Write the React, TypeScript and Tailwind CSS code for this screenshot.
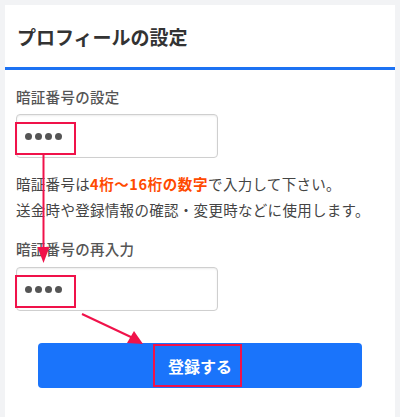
import React from "react";

const font = { fontFamily: '"Noto Sans CJK JP", "Noto Sans", sans-serif' };

function Dots() {
  return (
    <div className="flex items-center gap-[3px]">
      <span className="w-[7px] h-[7px] rounded-full bg-[#555]" />
      <span className="w-[7px] h-[7px] rounded-full bg-[#555]" />
      <span className="w-[7px] h-[7px] rounded-full bg-[#555]" />
      <span className="w-[7px] h-[7px] rounded-full bg-[#555]" />
    </div>
  );
}

function PinInput() {
  return (
    <div className="relative w-[202px] h-[44px] border border-[#cfcfcf] rounded-[4px] bg-white shadow-[inset_0_1px_2px_rgba(0,0,0,0.08)] flex items-center pl-[8px]">
      <Dots />
      <div className="absolute left-[-2px] top-[7px] w-[61px] h-[33px] border-2 border-[#f0124a]" />
    </div>
  );
}

export default function App() {
  return (
    <div className="relative min-h-[417px] bg-[#f2f3f5] pt-[5px] px-[5px]" style={font}>
      <div className="bg-white w-[390px] h-[412px] flex flex-col">
        <div className="h-[62px] flex items-center pl-[12px] text-[19px] font-bold text-[#333] leading-none">
          プロフィールの設定
        </div>
        <div className="h-[3px] bg-[#1d72f3]" />
        <div className="flex flex-col pl-[11px] pt-[17px]">
          <div className="text-[14.5px] leading-[20px] text-[#555] font-medium tracking-[0.3px]">暗証番号の設定</div>
          <div className="mt-[7px]">
            <PinInput />
          </div>
          <div className="mt-[13px] text-[14.5px] leading-[26px] text-[#444] tracking-[0.3px]">
            <div>
              暗証番号は<span className="text-[#ff4a00] font-bold tracking-[0.6px]">4桁〜16桁の数字</span>で入力して下さい。
            </div>
            <div>送金時や登録情報の確認・変更時などに使用します。</div>
          </div>
          <div className="mt-[16px] text-[14.5px] leading-[20px] text-[#555] font-medium tracking-[0.3px]">暗証番号の再入力</div>
          <div className="mt-[8px]">
            <PinInput />
          </div>
        </div>
        <div className="mt-[32px] flex justify-center">
          <div className="relative w-[324px] h-[45px] rounded-[4px] bg-[#1a74fb] flex items-center justify-center text-white font-bold text-[16px]">
            登録する
            <div className="absolute left-[115px] top-[1px] w-[89px] h-[43px] border-2 border-[#f0124a]" />
          </div>
        </div>
      </div>
      <svg className="absolute left-0 top-0 pointer-events-none" width="400" height="417" viewBox="0 0 400 417">
        <line x1="43.5" y1="155" x2="43.5" y2="250" stroke="#f0124a" strokeWidth="2" />
        <polygon points="37.5,247 49.5,247 43.5,263" fill="#f0124a" />
        <line x1="82" y1="314" x2="133" y2="338" stroke="#f0124a" strokeWidth="2" />
        <polygon points="143,344 127,343 134,331" fill="#f0124a" />
      </svg>
    </div>
  );
}
